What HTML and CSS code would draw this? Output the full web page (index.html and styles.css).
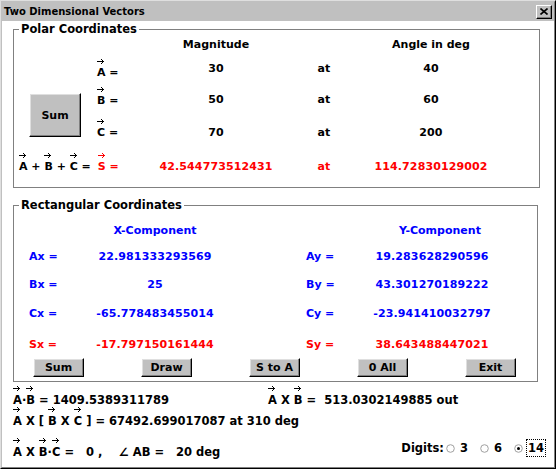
FILE: index.html
```html
<!DOCTYPE html>
<html>
<head>
<meta charset="utf-8">
<link rel="stylesheet" href="styles.css">
</head>
<body>
<svg class="defs" width="0" height="0"><defs><symbol id="arr" viewBox="0 0 7 5"><path d="M0 2h7v1H0zM4 0h1v1H4zM5 1h1v1H5zM5 3h1v1H5zM4 4h1v1H4z" fill="currentColor"/></symbol></defs></svg>
<div class="win"><div class="frame">
  <div class="titlebar">
    <span class="title">Two Dimensional Vectors</span>
    <span class="close"><svg width="8" height="7" viewBox="0 0 8 7"><path d="M0.5 0.5L7.5 6.5M7.5 0.5L0.5 6.5" stroke="#000" stroke-width="1.6"/></svg></span>
  </div>
  <div class="client">
    <fieldset class="group polar">
      <legend>Polar Coordinates</legend>
      <div class="pgrid">
        <div class="hd c3 r1">Magnitude</div>
        <div class="hd c5 r1">Angle in deg</div>
        <button class="bigbtn">Sum</button>

        <div class="lbl c2 r2 la"><span class="v">A<svg class="arw"><use href="#arr"/></svg></span> =</div>
        <div class="num c3 r2">30</div><div class="num c4 r2">at</div><div class="num c5 r2">40</div>

        <div class="lbl c2 r3 lb"><span class="v">B<svg class="arw"><use href="#arr"/></svg></span> =</div>
        <div class="num c3 r3">50</div><div class="num c4 r3">at</div><div class="num c5 r3">60</div>

        <div class="lbl c2 r4"><span class="v">C<svg class="arw"><use href="#arr"/></svg></span> =</div>
        <div class="num c3 r4">70</div><div class="num c4 r4">at</div><div class="num c5 r4">200</div>

        <div class="slbl r5"><span class="v">A<svg class="arw"><use href="#arr"/></svg></span> + <span class="v">B<svg class="arw"><use href="#arr"/></svg></span> + <span class="v">C<svg class="arw"><use href="#arr"/></svg></span> = <span class="red sred"><span class="v">S<svg class="arw"><use href="#arr"/></svg></span> =</span></div>
        <div class="num red c3 r5">42.544773512431</div><div class="num red c4 r5">at</div><div class="num red c5 r5">114.72830129002</div>
      </div>
    </fieldset>

    <fieldset class="group rect">
      <legend>Rectangular Coordinates</legend>
      <div class="rgrid">
        <div class="hd blue c2 r1">X-Component</div>
        <div class="hd blue yhd c5 r1">Y-Component</div>

        <div class="rl blue c1 r2">Ax =</div><div class="num blue c2 r2">22.981333293569</div>
        <div class="ryl blue c4 r2">Ay =</div><div class="num blue c5 r2">19.283628290596</div>

        <div class="rl blue c1 r3">Bx =</div><div class="num blue c2 r3">25</div>
        <div class="ryl blue c4 r3">By =</div><div class="num blue c5 r3">43.301270189222</div>

        <div class="rl blue c1 r4">Cx =</div><div class="num blue c2 r4">-65.778483455014</div>
        <div class="ryl blue c4 r4">Cy =</div><div class="num blue c5 r4">-23.941410032797</div>

        <div class="rl red c1 r5">Sx =</div><div class="num red c2 r5">-17.797150161444</div>
        <div class="ryl red c4 r5">Sy =</div><div class="num red c5 r5">38.643488447021</div>
      </div>
      <div class="btnrow">
        <button class="btn">Sum</button>
        <button class="btn">Draw</button>
        <button class="btn">S to A</button>
        <button class="btn">0 All</button>
        <button class="btn">Exit</button>
      </div>
    </fieldset>

    <div class="bottom">
      <div class="brow">
        <div class="bdot"><span class="v">A<svg class="arw"><use href="#arr"/></svg></span>·<span class="v">B<svg class="arw"><use href="#arr"/></svg></span> = 1409.5389311789</div>
        <div><span class="v">A<svg class="arw"><use href="#arr"/></svg></span> X <span class="v">B<svg class="arw"><use href="#arr"/></svg></span> =&nbsp; 513.0302149885 out</div>
      </div>
      <div class="brow b2">
        <div><span class="v">A<svg class="arw"><use href="#arr"/></svg></span> X [ <span class="v">B<svg class="arw"><use href="#arr"/></svg></span> X <span class="v">C<svg class="arw"><use href="#arr"/></svg></span> ] = 67492.699017087 at 310 deg</div>
      </div>
      <div class="brow b3">
        <div><span class="v">A<svg class="arw"><use href="#arr"/></svg></span> X <span class="v">B<svg class="arw"><use href="#arr"/></svg></span>·<span class="v">C<svg class="arw"><use href="#arr"/></svg></span> =&nbsp;&nbsp; 0 ,&nbsp;&nbsp;&nbsp; ∠ AB =&nbsp;&nbsp; 20 deg</div>
        <div class="digits">
          <span class="dlabel">Digits:</span>
          <span class="opt"><svg class="radio" viewBox="0 0 9 9"><circle cx="4.5" cy="4.5" r="3.8" fill="#fff" stroke="#a0a0a0" stroke-width="1"/></svg>3</span>
          <span class="opt"><svg class="radio" viewBox="0 0 9 9"><circle cx="4.5" cy="4.5" r="3.8" fill="#fff" stroke="#a0a0a0" stroke-width="1"/></svg>6</span>
          <span class="opt last"><svg class="radio" viewBox="0 0 9 9"><circle cx="4.5" cy="4.5" r="3.8" fill="#fff" stroke="#a0a0a0" stroke-width="1"/><circle cx="4.5" cy="4.5" r="1.5" fill="#000"/></svg><span class="focus">14</span></span>
        </div>
      </div>
    </div>
  </div>
</div></div>
</body>
</html>
```

FILE: styles.css
```css
* { box-sizing: border-box; }
html, body { margin: 0; padding: 0; }
body {
  width: 556px;
  height: 469px;
  overflow: hidden;
  background: #fff;
  font-family: "DejaVu Sans", sans-serif;
  font-weight: bold;
  font-size: 11px;
  color: #000;
}
.defs { display: block; width: 0; height: 0; overflow: hidden; position: absolute; }

.win {
  width: 556px;
  height: 469px;
  border: 1px solid;
  border-color: #dfdfdf #000 #000 #dfdfdf;
  display: flex;
  flex-direction: column;
}
.frame {
  flex: 1;
  border: 1px solid;
  border-color: #c0c0c0 #808080 #808080 #c0c0c0;
  display: flex;
  flex-direction: column;
  background: #fff;
}
.titlebar {
  height: 19px;
  background: #c0c0c0;
  display: flex;
  align-items: center;
  justify-content: space-between;
  padding: 0 2px 0 2px;
}
.title { font-size: 10px; line-height: 12px; }
.close {
  width: 16px;
  height: 14px;
  background: #c0c0c0;
  border: 1px solid;
  border-color: #fff #000 #000 #fff;
  box-shadow: inset -1px -1px #808080;
  display: flex;
  align-items: center;
  justify-content: center;
}
.close svg { display: block; }

.client { flex: 1; padding: 1px 0 0 11px; }

.group {
  margin: 0;
  padding: 0;
  border: 1px solid #808080;
  min-width: 0;
}
.group legend {
  margin-left: 5px;
  padding: 0 2px;
  font-size: 11.5px;
  line-height: 14px;
}
.polar { width: 527px; }
.rect { width: 525px; margin-top: 10px; }

.red { color: #f00; }
.blue { color: #00f; }

.v { position: relative; display: inline-block; }
.arw { position: absolute; left: 0; top: -6px; width: 7px; height: 5px; }

.pgrid {
  display: grid;
  grid-template-columns: 76px 65px 122px 94px 120px 1fr;
  grid-template-rows: 16px 32px 30px 36px 32px;
  align-items: center;
  line-height: 15px;
  padding-bottom: 5px;
}
.rgrid {
  display: grid;
  grid-template-columns: 81px 120px 85px 70px 124px 1fr;
  grid-template-rows: 18px 34px 22px 37px 24px;
  align-items: center;
  line-height: 15px;
  padding-top: 9px;
}
.c1 { grid-column: 1; }
.c2 { grid-column: 2; }
.c3 { grid-column: 3; }
.c4 { grid-column: 4; }
.c5 { grid-column: 5; }
.r1 { grid-row: 1; }
.r2 { grid-row: 2; }
.r3 { grid-row: 3; }
.r4 { grid-row: 4; }
.r5 { grid-row: 5; }

.hd, .num { text-align: center; white-space: nowrap; }
.num { letter-spacing: 0.1px; }
.yhd { padding-left: 16px; }

.lbl { padding-left: 7px; white-space: nowrap; }
.la { padding-top: 8px; }
.lb { padding-top: 2px; }
.slbl { grid-column: 1 / span 2; padding-left: 5px; white-space: nowrap; }
.sred { margin-left: 3px; }
.rl { padding-left: 15px; white-space: nowrap; }
.ryl { padding-left: 6px; white-space: nowrap; }

.bigbtn {
  grid-column: 1;
  grid-row: 3 / span 2;
  align-self: start;
  margin: 9px 0 0 15px;
  width: 52px;
  height: 44px;
}
.bigbtn, .btn {
  background: #c0c0c0;
  border: 1px solid;
  border-color: #fff #000 #000 #fff;
  box-shadow: inset -1px -1px #808080, inset 1px 1px #dfdfdf;
  font: inherit;
  color: #000;
  padding: 0;
  display: flex;
  align-items: center;
  justify-content: center;
}
.btnrow {
  display: flex;
  gap: 57px;
  padding: 2px 0 4px 19px;
}
.btn { width: 51px; height: 19px; }

.bottom { padding: 10px 8px 0 0; line-height: 16px; font-size: 11.5px; }
.brow { display: flex; white-space: nowrap; }
.bdot { width: 255px; }
.b2 { margin-top: 5px; }
.b3 { margin-top: 15px; justify-content: space-between; align-items: flex-start; }
.digits { display: flex; align-items: center; margin-top: -5px; }
.dlabel { margin-right: 2px; }
.opt { display: flex; align-items: center; gap: 5px; }
.opt + .opt { margin-left: 12px; }
.last { gap: 3px; }
.radio { width: 9px; height: 9px; display: block; }
.focus { border: 1px dotted #000; padding: 0 1px; line-height: 16px; }
```
